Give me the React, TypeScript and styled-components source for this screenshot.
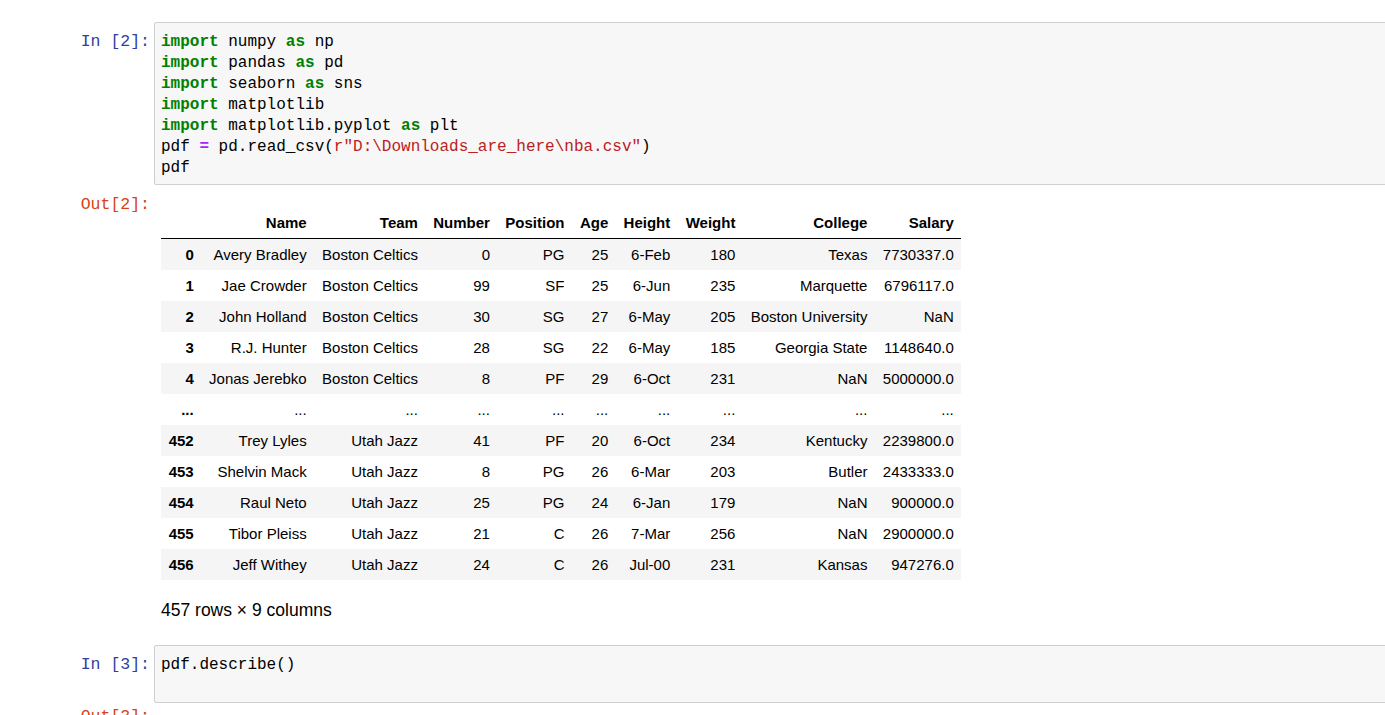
import React from 'react';
import styled, { createGlobalStyle } from 'styled-components';

const GlobalStyle = createGlobalStyle`
  html, body {
    margin: 0;
    padding: 0;
    background: #fff;
    overflow: hidden;
  }
  body {
    font-family: "Liberation Sans", Arial, sans-serif;
    color: #000;
  }
`;

type Row = (string | number)[];

const columns = ['Name', 'Team', 'Number', 'Position', 'Age', 'Height', 'Weight', 'College', 'Salary'];

const rows: Row[] = [
  ['0', 'Avery Bradley', 'Boston Celtics', 0, 'PG', 25, '6-Feb', 180, 'Texas', '7730337.0'],
  ['1', 'Jae Crowder', 'Boston Celtics', 99, 'SF', 25, '6-Jun', 235, 'Marquette', '6796117.0'],
  ['2', 'John Holland', 'Boston Celtics', 30, 'SG', 27, '6-May', 205, 'Boston University', 'NaN'],
  ['3', 'R.J. Hunter', 'Boston Celtics', 28, 'SG', 22, '6-May', 185, 'Georgia State', '1148640.0'],
  ['4', 'Jonas Jerebko', 'Boston Celtics', 8, 'PF', 29, '6-Oct', 231, 'NaN', '5000000.0'],
  ['...', '...', '...', '...', '...', '...', '...', '...', '...', '...'],
  ['452', 'Trey Lyles', 'Utah Jazz', 41, 'PF', 20, '6-Oct', 234, 'Kentucky', '2239800.0'],
  ['453', 'Shelvin Mack', 'Utah Jazz', 8, 'PG', 26, '6-Mar', 203, 'Butler', '2433333.0'],
  ['454', 'Raul Neto', 'Utah Jazz', 25, 'PG', 24, '6-Jan', 179, 'NaN', '900000.0'],
  ['455', 'Tibor Pleiss', 'Utah Jazz', 21, 'C', 26, '7-Mar', 256, 'NaN', '2900000.0'],
  ['456', 'Jeff Withey', 'Utah Jazz', 24, 'C', 26, 'Jul-00', 231, 'Kansas', '947276.0'],
];

const Notebook = styled.div`
  width: calc(100% + 40px);
  padding-top: 22px;
  height: 715px;
  box-sizing: border-box;
`;

const CellRow = styled.div<{ $gap?: number }>`
  display: flex;
  align-items: flex-start;
  margin-top: ${(p) => p.$gap ?? 0}px;
`;

const Prompt = styled.div<{ $out?: boolean }>`
  flex: 0 0 154px;
  box-sizing: border-box;
  padding-right: 4px;
  text-align: right;
  font-family: "Liberation Mono", "DejaVu Sans Mono", monospace;
  font-size: 16.5px;
  line-height: 21px;
  color: ${(p) => (p.$out ? '#D84315' : '#303F9F')};
`;

const InputPrompt = styled(Prompt)`
  padding-top: 9px;
`;

const OutPrompt = styled(Prompt)`
  padding-top: 2px;
`;

const InputArea = styled.div<{ $minHeight?: number }>`
  flex: 1;
  box-sizing: border-box;
  min-height: ${(p) => p.$minHeight ?? 0}px;
  background: #f7f7f7;
  border: 1px solid #cfcfcf;
  border-radius: 2px;
  padding: 9px 6px 5px;
`;

const Code = styled.pre`
  margin: 0;
  font-family: "Liberation Mono", "DejaVu Sans Mono", monospace;
  font-size: 16px;
  line-height: 21px;
  color: #000;
`;

const Kw = styled.span`
  color: #008000;
  font-weight: bold;
`;

const Op = styled.span`
  color: #aa22ff;
  font-weight: bold;
`;

const Str = styled.span`
  color: #ba2121;
`;

const OutputArea = styled.div`
  flex: 1;
  padding-left: 7px;
`;

const Frame = styled.table`
  margin-top: 15px;
  border-collapse: collapse;
  border-spacing: 0;
  font-size: 15px;
  color: #000;
`;

const HeadCell = styled.th`
  height: 31px;
  padding: 0 7.7px;
  text-align: right;
  vertical-align: middle;
  font-weight: bold;
  border-bottom: 1px solid #000;
  white-space: nowrap;
`;

const BodyRow = styled.tr`
  &:nth-child(odd) {
    background: #f5f5f5;
  }
`;

const IndexCell = styled.th`
  height: 31px;
  padding: 0 7.7px;
  text-align: right;
  vertical-align: middle;
  font-weight: bold;
  white-space: nowrap;
`;

const Cell = styled.td`
  height: 31px;
  padding: 0 7.7px;
  text-align: right;
  vertical-align: middle;
  white-space: nowrap;
`;

const Summary = styled.p`
  margin: 20px 0 0;
  font-size: 17.5px;
  line-height: 20px;
`;

export default function App() {
  return (
    <>
      <GlobalStyle />
      <Notebook>
        <CellRow>
          <InputPrompt>In&nbsp;[2]:</InputPrompt>
          <InputArea>
            <Code>
              <Kw>import</Kw> numpy <Kw>as</Kw> np{'\n'}
              <Kw>import</Kw> pandas <Kw>as</Kw> pd{'\n'}
              <Kw>import</Kw> seaborn <Kw>as</Kw> sns{'\n'}
              <Kw>import</Kw> matplotlib{'\n'}
              <Kw>import</Kw> matplotlib.pyplot <Kw>as</Kw> plt{'\n'}
              pdf <Op>=</Op> pd.read_csv(<Str>r"D:\Downloads_are_here\nba.csv"</Str>){'\n'}
              pdf
            </Code>
          </InputArea>
        </CellRow>

        <CellRow $gap={7}>
          <OutPrompt $out>Out[2]:</OutPrompt>
          <OutputArea>
            <Frame>
              <thead>
                <tr>
                  <HeadCell />
                  {columns.map((c) => (
                    <HeadCell key={c}>{c}</HeadCell>
                  ))}
                </tr>
              </thead>
              <tbody>
                {rows.map((r) => (
                  <BodyRow key={String(r[0])}>
                    <IndexCell>{r[0]}</IndexCell>
                    {r.slice(1).map((v, i) => (
                      <Cell key={i}>{v}</Cell>
                    ))}
                  </BodyRow>
                ))}
              </tbody>
            </Frame>
            <Summary>457 rows × 9 columns</Summary>
          </OutputArea>
        </CellRow>

        <CellRow $gap={25}>
          <InputPrompt>In&nbsp;[3]:</InputPrompt>
          <InputArea $minHeight={58}>
            <Code>pdf.describe()</Code>
          </InputArea>
        </CellRow>

        <CellRow $gap={1}>
          <OutPrompt $out>Out[3]:</OutPrompt>
        </CellRow>
      </Notebook>
    </>
  );
}
